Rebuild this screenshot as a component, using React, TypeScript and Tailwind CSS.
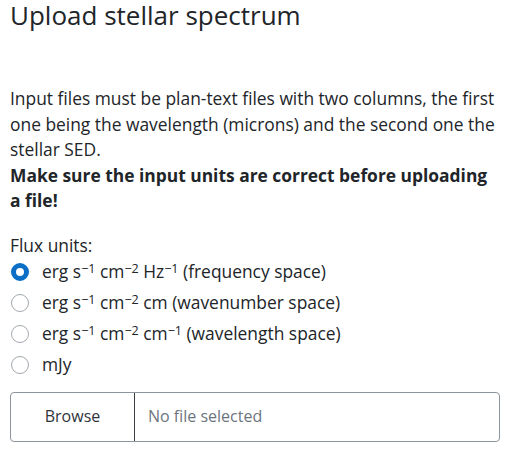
import { useState } from "react";

const sup = "static align-[0.4em] text-[72%] leading-none";

const units = [
  {
    id: "freq",
    label: (
      <>
        erg s<sup className={sup}>−1</sup> cm<sup className={sup}>−2</sup> Hz<sup className={sup}>−1</sup> (frequency space)
      </>
    ),
  },
  {
    id: "wavenumber",
    label: (
      <>
        erg s<sup className={sup}>−1</sup> cm<sup className={sup}>−2</sup> cm (wavenumber space)
      </>
    ),
  },
  {
    id: "wavelength",
    label: (
      <>
        erg s<sup className={sup}>−1</sup> cm<sup className={sup}>−2</sup> cm<sup className={sup}>−1</sup> (wavelength space)
      </>
    ),
  },
  { id: "mjy", label: <>mJy</> },
];

export default function App() {
  const [unit, setUnit] = useState("freq");

  return (
    <div className="min-h-screen bg-white px-[10px] font-['Open_Sans',sans-serif] text-[17.4px] leading-[25.5px] text-[#212529]">
      <h3 className="text-[26px] leading-[30px] font-normal">Upload stellar spectrum</h3>

      <p className="mt-[56px]">
        Input files must be plan-text files with two columns, the first one being the wavelength
        (microns) and the second one the stellar SED.
        <br />
        <strong className="font-bold">Make sure the input units are correct before uploading a file!</strong>
      </p>

      <div className="mt-[19px]">
        <label className="block">Flux units:</label>
        <div className="-mt-[2px] flex flex-col">
          {units.map((u) => {
            const on = unit === u.id;
            return (
              <label key={u.id} className="flex h-[31px] cursor-pointer items-center gap-[13px]">
                <span
                  onClick={() => setUnit(u.id)}
                  className={
                    on
                      ? "ml-px h-[18px] w-[18px] shrink-0 rounded-full border-[5px] border-[#0b6fc6] bg-white"
                      : "ml-px h-[18px] w-[18px] shrink-0 rounded-full border border-[#a3a9ae] bg-white"
                  }
                />
                <span onClick={() => setUnit(u.id)}>{u.label}</span>
              </label>
            );
          })}
        </div>
      </div>

      <div className="mt-[12px] flex h-[50px] w-[490px] overflow-hidden rounded-[4px] border border-[#8d949b]">
        <button className="w-[124px] shrink-0 border-r border-[#3b3f44] text-[16px] text-[#2f353b]">
          Browse
        </button>
        <div className="flex items-center px-[13px] text-[16px] text-[#6c757d]">No file selected</div>
      </div>
    </div>
  );
}
